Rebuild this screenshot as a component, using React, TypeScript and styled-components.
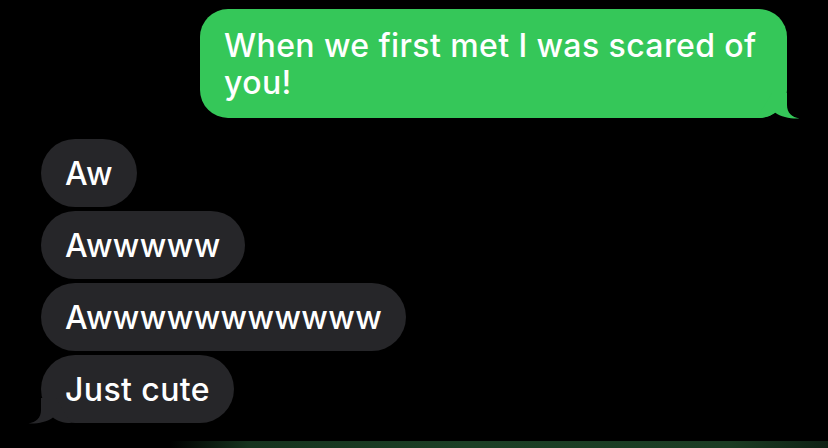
import React from "react";
import styled, { createGlobalStyle } from "styled-components";

const Global = createGlobalStyle`
  html, body {
    margin: 0;
    padding: 0;
    background: #000;
  }
  body {
    width: 828px;
    height: 448px;
    overflow: hidden;
    font-family: Inter, "Noto Sans", "Liberation Sans", sans-serif;
  }
`;

const Screen = styled.div`
  width: 828px;
  height: 448px;
  background: #000;
  display: flex;
  flex-direction: column;
  box-sizing: border-box;
  padding-top: 9px;
  overflow: hidden;
`;

const SentRow = styled.div`
  display: flex;
  justify-content: flex-end;
  padding-right: 41px;
`;

const ReceivedGroup = styled.div`
  display: flex;
  flex-direction: column;
  align-items: flex-start;
  gap: 4px;
  padding-left: 41px;
  margin-top: 21px;
`;

const SentBubble = styled.div`
  position: relative;
  width: 587px;
  box-sizing: border-box;
  padding: 17.5px 24px;
  background: #35c759;
  color: #fff;
  border-radius: 28px;
  font-size: 32px;
  line-height: 37px;
  font-weight: 500;
  letter-spacing: 0.4px;
`;

const ReceivedBubble = styled.div`
  position: relative;
  height: 68px;
  box-sizing: border-box;
  padding: 0 24px;
  display: flex;
  align-items: center;
  background: #262629;
  color: #fff;
  border-radius: 34px;
  font-size: 32px;
  line-height: 37px;
  font-weight: 500;
  letter-spacing: 0.4px;
  white-space: nowrap;
`;

const TailSvg = styled.svg<{ $side: "left" | "right" }>`
  position: absolute;
  bottom: -1px;
  width: 45px;
  height: 31px;
  ${(p) =>
    p.$side === "right"
      ? "right: -15px;"
      : "left: -15px; transform: scaleX(-1);"}
`;

const BottomGlow = styled.div`
  margin-top: auto;
  margin-left: 170px;
  height: 7px;
  background: linear-gradient(
    90deg,
    rgba(20, 45, 27, 0) 0%,
    #16331e 12%,
    #1c3f25 45%,
    #1b3c23 85%,
    #0e2014 100%
  );
`;

function Tail({ side, color }: { side: "left" | "right"; color: string }) {
  return (
    <TailSvg $side={side} viewBox="0 0 45 31" aria-hidden>
      <path
        d="M0 30 C8 30 14 28 18 24.5 C24 29 34 31 42.5 30.5 C35 29 30 25 30 17 L30 5 L15 5 Z"
        fill={color}
      />
    </TailSvg>
  );
}

export default function App() {
  return (
    <>
      <Global />
      <Screen>
        <SentRow>
          <SentBubble>
            When we first met I was scared of you!
            <Tail side="right" color="#35c759" />
          </SentBubble>
        </SentRow>
        <ReceivedGroup>
          <ReceivedBubble>Aw</ReceivedBubble>
          <ReceivedBubble>Awwwww</ReceivedBubble>
          <ReceivedBubble>Awwwwwwwwwww</ReceivedBubble>
          <ReceivedBubble>
            Just cute
            <Tail side="left" color="#262629" />
          </ReceivedBubble>
        </ReceivedGroup>
        <BottomGlow />
      </Screen>
    </>
  );
}
